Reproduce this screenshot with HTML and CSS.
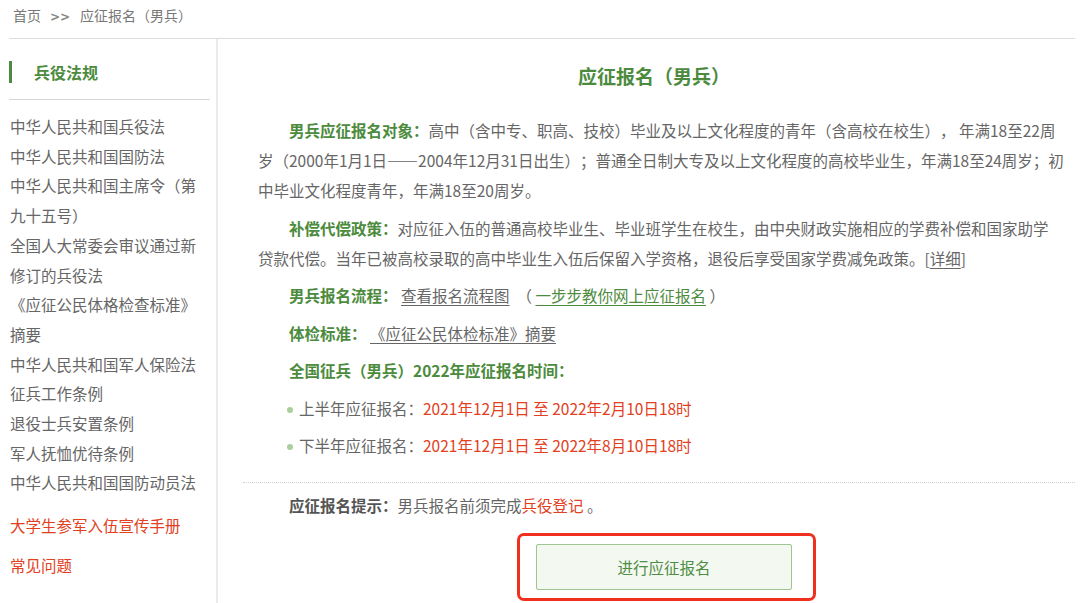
FILE: index.html
```html
<!DOCTYPE html>
<html lang="zh-CN">
<head>
<meta charset="utf-8">
<title>应征报名（男兵）</title>
<link rel="stylesheet" href="styles.css">
</head>
<body>
<div class="page">
  <div class="crumb">
    <a class="crumb-link">首页</a><span class="crumb-sep">&gt;&gt;</span><span>应征报名（男兵）</span>
  </div>
  <div class="layout">
    <aside class="side">
      <div class="side-head">兵役法规</div>
      <ul class="side-list">
        <li>中华人民共和国兵役法</li>
        <li>中华人民共和国国防法</li>
        <li>中华人民共和国主席令（第九十五号）</li>
        <li>全国人大常委会审议通过新修订的兵役法</li>
        <li>《应征公民体格检查标准》摘要</li>
        <li>中华人民共和国军人保险法</li>
        <li>征兵工作条例</li>
        <li>退役士兵安置条例</li>
        <li>军人抚恤优待条例</li>
        <li>中华人民共和国国防动员法</li>
      </ul>
      <div class="side-red first">大学生参军入伍宣传手册</div>
      <div class="side-red">常见问题</div>
    </aside>
    <main class="main">
      <h1 class="title">应征报名（男兵）</h1>
      <div class="content">
        <p class="para"><b class="lbl">男兵应征报名对象：</b>高中（含中专、职高、技校）毕业及以上文化程度的青年（含高校在校生）， 年满18至22周<br>岁（2000年1月1日——2004年12月31日出生）；普通全日制大专及以上文化程度的高校毕业生，年满18至24周岁；初<br>中毕业文化程度青年，年满18至20周岁。</p>
        <p class="para"><b class="lbl">补偿代偿政策：</b>对应征入伍的普通高校毕业生、毕业班学生在校生，由中央财政实施相应的学费补偿和国家助学<br>贷款代偿。当年已被高校录取的高中毕业生入伍后保留入学资格，退役后享受国家学费减免政策。[<a class="ul">详细</a>]</p>
        <p class="para"><b class="lbl">男兵报名流程：</b> <a class="ul">查看报名流程图</a> &nbsp;（ <a class="ul green">一步步教你网上应征报名</a> ）</p>
        <p class="para"><b class="lbl">体检标准：</b> <a class="ul">《应征公民体检标准》摘要</a></p>
        <p class="para"><b class="lbl">全国征兵（男兵）2022年应征报名时间：</b></p>
        <ul class="times">
          <li><span class="dot"></span>上半年应征报名：<span class="red">2021年12月1日 至 2022年2月10日18时</span></li>
          <li><span class="dot"></span>下半年应征报名：<span class="red">2021年12月1日 至 2022年8月10日18时</span></li>
        </ul>
      </div>
      <div class="dotted"></div>
      <div class="content">
        <p class="tip"><b class="tip-lbl">应征报名提示：</b>男兵报名前须完成<span class="red">兵役登记</span> 。</p>
        <div class="btn-row">
          <div class="mark">
            <div class="btn">进行应征报名</div>
          </div>
        </div>
      </div>
    </main>
  </div>
</div>
</body>
</html>
```

FILE: styles.css
```css
* { box-sizing: border-box; }
html, body { margin: 0; padding: 0; background: #fff; }
body {
  font-family: "Noto Sans CJK SC", "DejaVu Sans", sans-serif;
  color: #666;
  height: 603px;
  overflow: hidden;
  text-spacing-trim: space-all;
}
.page { padding: 0 5px 0 9px; }
.crumb {
  height: 39px;
  padding: 5px 0 0 4px;
  font-size: 14px;
  line-height: 20px;
  color: #777;
  border-bottom: 1px solid #dcdcdc;
}
.crumb-sep { margin: 0 10px 0 9px; font-weight: bold; font-family: "DejaVu Sans", sans-serif; font-size: 12px; color: #888; }
.layout { display: flex; }
.side {
  width: 209px;
  flex: none;
  padding-right: 6px;
  border-right: 2px solid #ebebeb;
  min-height: 570px;
}
.side-head {
  margin-top: 22px;
  height: 22px;
  border-left: 3px solid #4c8b3d;
  padding-left: 22px;
  font-size: 16px;
  line-height: 22px;
  font-weight: bold;
  color: #4c8b3d;
}
.side-list {
  list-style: none;
  margin: 16px 0 0;
  padding: 12px 6px 0 1px;
  border-top: 1px solid #d6d6d6;
  font-size: 15.5px;
  line-height: 29.7px;
  color: #666;
}
.side-red {
  font-size: 15.5px;
  line-height: 30px;
  color: #e2401e;
  padding-left: 1px;
  margin-top: 10px;
}
.side-red.first { margin-top: 12px; }
.main { flex: 1; }
.title {
  margin: 23px 0 0;
  padding-left: 15px;
  text-align: center;
  font-size: 19px;
  line-height: 28px;
  font-weight: bold;
  color: #4c8b3d;
}
.content { padding: 0 0 0 40px; width: 845px; }
.para {
  margin: 25px -40px 0 0;
  font-size: 15.5px;
  line-height: 30px;
  text-indent: 2em;
  color: #666;
}
.para + .para { margin-top: 7.5px; }
.lbl { color: #4c8b3d; font-weight: bold; }
.ul { color: #666; text-decoration: underline; text-underline-offset: 3px; }
.ul.green { color: #4c8b3d; }
.red { color: #e2401e; }
.times { list-style: none; margin: 7.5px 0 0; padding: 0 0 0 29px; font-size: 15.5px; line-height: 30px; }
.times li + li { margin-top: 7px; }
.dot {
  display: inline-block;
  width: 6px; height: 6px;
  border-radius: 50%;
  background: #a9d09c;
  margin-right: 6px;
  vertical-align: 2px;
}
.dotted {
  margin: 22px 0 0 25px;
  border-top: 1px dotted #cfcfcf;
}
.tip { margin: 10px 0 0; font-size: 15.5px; line-height: 24px; text-indent: 2em; color: #666; }
.tip-lbl { color: #555; font-weight: bold; }
.btn-row { display: flex; justify-content: center; margin-top: 16px; padding-left: 12px; }
.mark {
  border: 3px solid #f0301e;
  border-radius: 7px;
  padding: 8px 21px 8px 16px;
}
.btn {
  width: 256px;
  height: 46px;
  border: 1px solid #9dc693;
  border-radius: 2px;
  background: #f3f8f1;
  color: #4e8d44;
  font-size: 15.5px;
  line-height: 44px;
  text-align: center;
}
```
